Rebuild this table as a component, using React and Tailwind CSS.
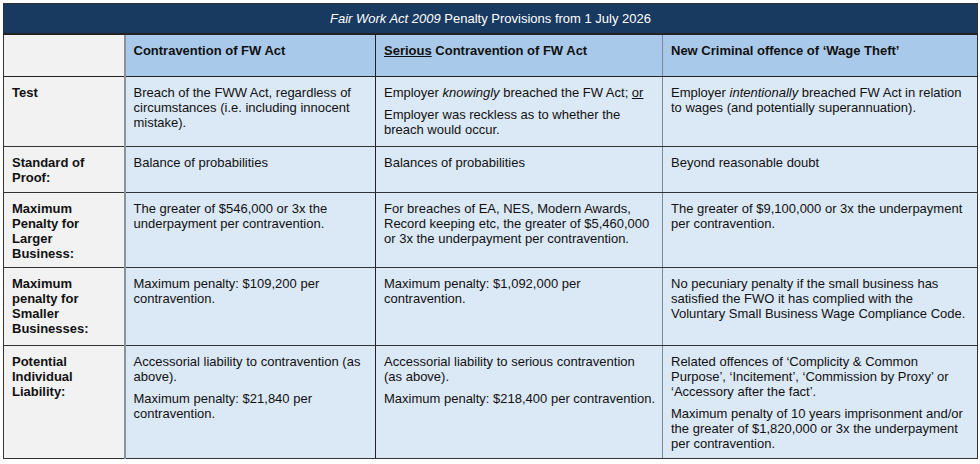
import React from 'react';

const rows = [
  {
    label: 'Test',
    h: 'h-[70px]',
    cells: [
      [<>Breach of the FWW Act, regardless of circumstances (i.e. including innocent mistake).</>],
      [
        <>Employer <i>knowingly</i> breached the FW Act; <u>or</u></>,
        <>Employer was reckless as to whether the breach would occur.</>,
      ],
      [<>Employer <i>intentionally</i> breached FW Act in relation to wages (and potentially superannuation).</>],
    ],
  },
  {
    label: 'Standard of Proof:',
    h: 'h-[46px]',
    cells: [['Balance of probabilities'], ['Balances of probabilities'], ['Beyond reasonable doubt']],
  },
  {
    label: 'Maximum Penalty for Larger Business:',
    h: 'h-[75px]',
    cells: [
      ['The greater of $546,000 or 3x the underpayment per contravention.'],
      ['For breaches of EA, NES, Modern Awards, Record keeping etc, the greater of $5,460,000 or 3x the underpayment per contravention.'],
      ['The greater of $9,100,000 or 3x the underpayment per contravention.'],
    ],
  },
  {
    label: 'Maximum penalty for Smaller Businesses:',
    h: 'h-[78px]',
    cells: [
      ['Maximum penalty: $109,200 per contravention.'],
      ['Maximum penalty: $1,092,000 per contravention.'],
      [<>No pecuniary penalty if the small business has satisfied the FWO it has complied with the<br />Voluntary Small Business Wage Compliance Code.</>],
    ],
  },
  {
    label: 'Potential Individual Liability:',
    h: 'h-[113px]',
    cells: [
      ['Accessorial liability to contravention (as above).', 'Maximum penalty: $21,840 per contravention.'],
      [<>Accessorial liability to serious contravention<br />(as above).</>, 'Maximum penalty: $218,400 per contravention.'],
      [
        'Related offences of ‘Complicity & Common Purpose’, ‘Incitement’, ‘Commission by Proxy’ or ‘Accessory after the fact’.',
        'Maximum penalty of 10 years imprisonment and/or the greater of $1,820,000 or 3x the underpayment per contravention.',
      ],
    ],
  },
];

export default function App() {
  return (
    <div className="w-[980px] h-[464px] bg-white p-[3px] font-['Liberation_Sans',Arial,sans-serif] text-[13px] leading-[15px] text-[#111]">
      <table className="w-[974px] table-fixed border-collapse border border-[#333]">
        <colgroup>
          <col className="w-[121px]" />
          <col className="w-[251px]" />
          <col className="w-[287px]" />
          <col className="w-[315px]" />
        </colgroup>
        <tbody>
          {/* title bar */}
          <tr className="h-[30px]">
            <td colSpan={4} className="bg-[#193a60] text-white text-center border-b-2 border-b-[#222] align-middle">
              <i>Fair Work Act 2009</i> Penalty Provisions from 1 July 2026
            </td>
          </tr>

          {/* column headings */}
          <tr className="h-[43px]">
            <td className="bg-[#f2f2f2] border-r-2 border-r-[#8d939b] border-b border-b-[#222]"></td>
            <td className="bg-[#a8c9ea] font-bold align-top pt-[8px] pl-2 border-r border-r-[#222] border-b border-b-[#222]">
              Contravention of FW Act
            </td>
            <td className="bg-[#a8c9ea] font-bold align-top pt-[8px] pl-2 border-r border-r-[#7d8797] border-b border-b-[#222]">
              <u>Serious</u> Contravention of FW Act
            </td>
            <td className="bg-[#a8c9ea] font-bold align-top pt-[8px] pl-2 border-b border-b-[#222]">
              New Criminal offence of ‘Wage Theft’
            </td>
          </tr>

          {rows.map((r, i) => (
            <tr key={i} className={r.h}>
              <td className="bg-[#f2f2f2] font-bold align-top pt-[8px] pl-2 pr-3 border-r-2 border-r-[#8d939b] border-b border-b-[#333]">
                {r.label}
              </td>
              {r.cells.map((ps, j) => (
                <td
                  key={j}
                  className={
                    'bg-[#dbe8f6] align-top pt-[8px] border-b border-b-[#333] ' +
                    (j === 0
                      ? 'pl-2 pr-[6px] border-r border-r-[#222]'
                      : j === 1
                      ? 'pl-2 pr-1 border-r border-r-[#7d8797]'
                      : 'pl-2 pr-[6px]')
                  }
                >
                  {ps.map((p, k) => (
                    <p key={k} className={k > 0 ? 'mt-[7px]' : ''}>
                      {p}
                    </p>
                  ))}
                </td>
              ))}
            </tr>
          ))}
        </tbody>
      </table>
    </div>
  );
}
